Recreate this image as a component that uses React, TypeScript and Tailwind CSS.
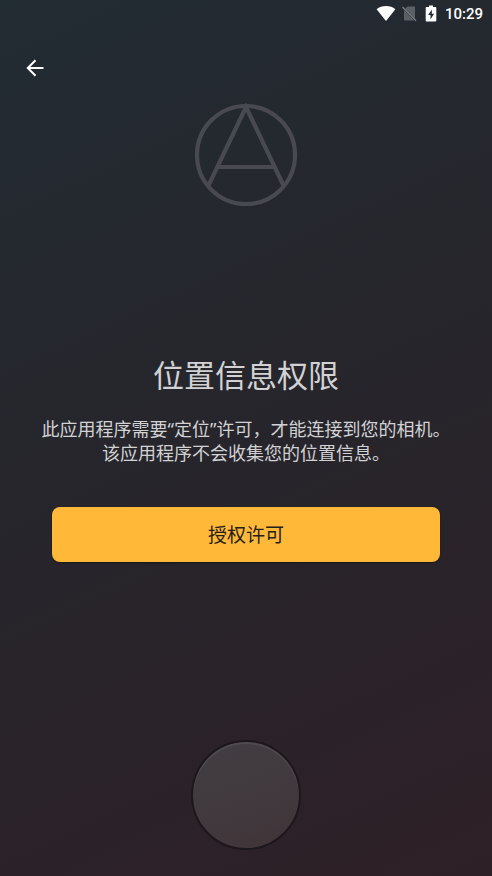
function StatusBar() {
  return (
    <div className="flex h-7 items-center justify-end pr-[9px] text-white">
      <svg className="mr-[5px] h-[18px] w-5" viewBox="0 0 20 18" fill="currentColor" aria-hidden="true">
        <path d="M10 16 .6 4.200C3.200 2.100 6.500 1 10 1s6.800 1.100 9.400 3.200z" />
      </svg>
      <svg className="mr-2 h-[18px] w-4" viewBox="0 0 16 18" aria-hidden="true">
        <path d="M6.500 1.500H13c.6 0 1 .4 1 1v11.200L4.300 3.700zM3 5.100 13.200 15.500H4c-.6 0-1-.4-1-1z" fill="#5b6065" />
        <path d="M1.500 2 15 15.800" stroke="#7b7f83" strokeWidth="1.300" />
      </svg>
      <svg className="mr-2 h-[18px] w-3" viewBox="0 0 12 18" aria-hidden="true">
        <path d="M1.600 2.100H4V.5h4v1.600h2.400c.5 0 .9.400.9.900v12.600c0 .5-.4.900-.9.900H1.600c-.5 0-.9-.4-.9-.9V3c0-.5.4-.9.900-.9z" fill="currentColor" />
        <path d="M6.800 4.500 3.200 9.900h2.300v4.600L9 8.700H6.800z" fill="#222b32" />
      </svg>
      <time className="font-['Roboto',sans-serif] text-[15px] leading-5 font-medium">10:29</time>
    </div>
  )
}

function Logo() {
  return (
    <svg className="h-[104px] w-[104px]" viewBox="0 0 104 104" fill="none" stroke="#494950" strokeWidth="4.200" aria-hidden="true">
      <circle cx="52" cy="52" r="49" />
      <path d="M14.500 82.500 52 4l37.500 78.500M24 64h56" />
    </svg>
  )
}

export default function App() {
  return (
    <div
      lang="zh-CN"
      className="flex min-h-screen flex-col bg-linear-155 from-[#222c33] via-[#26252b] to-[#2e2027] font-['Noto_Sans','Noto_Sans_CJK_SC',sans-serif] text-[#d2d2d4]"
    >
      <StatusBar />
      <header className="px-6 pt-7">
        <button type="button" aria-label="返回" className="flex size-6 items-center justify-center text-white">
          <svg className="size-6" viewBox="0 0 24 24" fill="none" stroke="currentColor" strokeWidth="2" aria-hidden="true">
            <path d="M19.500 12H4M11.500 4.300 3.800 12l7.700 7.700" />
          </svg>
        </button>
      </header>
      <main className="flex grow flex-col items-center pt-[23px]">
        <Logo />
        <h1 className="mt-37 text-center text-[31px] leading-10 font-normal">位置信息权限</h1>
        <p className="mt-[22px] text-center text-lg leading-6">
          此应用程序需要“定位”许可，才能连接到您的相机。
          <br />
          该应用程序不会收集您的位置信息。
        </p>
        <div className="mt-[42px] w-full px-[52px]">
          <button
            type="button"
            className="h-[55px] w-full rounded-lg bg-[#ffb838] text-[19px] leading-6 text-[#25201a] shadow-[0_1px_2px_rgba(0,0,0,0.4)]"
          >
            授权许可
          </button>
        </div>
      </main>
      <footer className="flex justify-center pb-[26px]">
        <button
          type="button"
          aria-label="快门"
          className="size-[110px] rounded-full border-2 border-[#1d171c] bg-linear-160 from-[#423e43] to-[#403539] shadow-[inset_0_2px_1px_rgba(255,255,255,0.08)]"
        />
      </footer>
    </div>
  )
}
